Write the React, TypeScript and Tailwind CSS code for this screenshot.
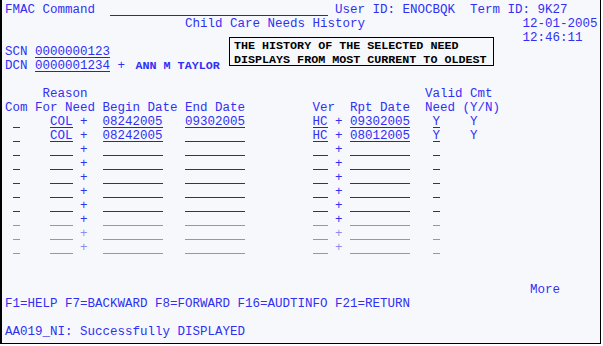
import type { ReactNode } from 'react';

const sp = (n: number) => ' '.repeat(n);

const WIDTH: Record<number, string> = {
  1: 'w-[1ch]',
  2: 'w-[2ch]',
  3: 'w-[3ch]',
  8: 'w-[8ch]',
  10: 'w-[10ch]',
  29: 'w-[29ch]',
};

function Field({ n, value = '', faded = false }: { n: number; value?: string; faded?: boolean }) {
  return (
    <span
      className={`inline-block h-[13px] align-top border-b ${WIDTH[n]} ${
        faded ? 'border-[#8c8cf2]' : 'border-[#2323dc]'
      }`}
    >
      {value}
    </span>
  );
}

function Line({ children }: { children?: ReactNode }) {
  return <div className="h-[14px] leading-[14px] whitespace-pre">{children ?? ' '}</div>;
}

type Row = {
  reason?: string;
  begin?: string;
  end?: string;
  ver?: string;
  rpt?: string;
  valid?: string;
  cmt?: string;
};

const rows: Row[] = [
  { reason: 'COL', begin: '08242005', end: '09302005', ver: 'HC', rpt: '09302005', valid: 'Y', cmt: 'Y' },
  { reason: 'COL', begin: '08242005', ver: 'HC', rpt: '08012005', valid: 'Y', cmt: 'Y' },
  {}, {}, {}, {}, {}, {}, {}, {},
];

export default function App() {
  return (
    <div className="w-[603px] h-[346px] bg-white">
      <div
        className="relative w-[601px] h-[344px] border-l-2 border-r border-b border-black bg-[#f7f8fc] pt-[3px] pl-[3px] text-[12.5px] text-[#3030f4]"
        style={{ fontFamily: '"Liberation Mono", monospace' }}
      >
        <Line>
          {'FMAC Command  '}
          <Field n={29} />
          {' User ID: ENOCBQK  Term ID: 9K27'}
        </Line>
        <Line>{sp(24) + 'Child Care Needs History' + sp(21) + '12-01-2005'}</Line>
        <Line>{sp(69) + '12:46:11'}</Line>
        <Line>
          {'SCN '}
          <Field n={10} value="0000000123" />
        </Line>
        <Line>
          {'DCN '}
          <Field n={10} value="0000001234" />
          {' + '}
          <span className="ml-[3px] text-[11.7px] font-bold">ANN M TAYLOR</span>
        </Line>
        <Line />
        <Line>{sp(5) + 'Reason' + sp(45) + 'Valid Cmt'}</Line>
        <Line>{'Com For Need Begin Date End Date' + sp(9) + 'Ver  Rpt Date  Need (Y/N)'}</Line>
        {rows.map((r, i) => {
          const faded = i >= 7;
          const plusFaded = i >= 8;
          return (
            <Line key={i}>
              {' '}
              <Field n={1} faded={faded} />
              {sp(4)}
              <Field n={3} value={r.reason} faded={faded} />
              <span className={plusFaded ? 'text-[#8c8cf2]' : ''}>{' +  '}</span>
              <Field n={8} value={r.begin} faded={faded} />
              {sp(3)}
              <Field n={8} value={r.end} faded={faded} />
              {sp(9)}
              <Field n={2} value={r.ver} faded={faded} />
              <span className={plusFaded ? 'text-[#8c8cf2]' : ''}>{' + '}</span>
              <Field n={8} value={r.rpt} faded={faded} />
              {sp(3)}
              <Field n={1} value={r.valid} faded={faded} />
              {sp(4) + (r.cmt ?? '')}
            </Line>
          );
        })}
        <Line />
        <Line />
        <Line>{sp(70) + 'More'}</Line>
        <Line>F1=HELP F7=BACKWARD F8=FORWARD F16=AUDTINFO F21=RETURN</Line>
        <Line />
        <Line>AA019_NI: Successfully DISPLAYED</Line>

        <div className="absolute left-[227px] top-[37px] w-[265px] h-[29px] border border-black pl-[4px] pt-[1px] text-[11.7px] leading-[14px] font-bold text-black whitespace-pre">
          <div>THE HISTORY OF THE SELECTED NEED</div>
          <div>DISPLAYS FROM MOST CURRENT TO OLDEST</div>
        </div>
      </div>
    </div>
  );
}
